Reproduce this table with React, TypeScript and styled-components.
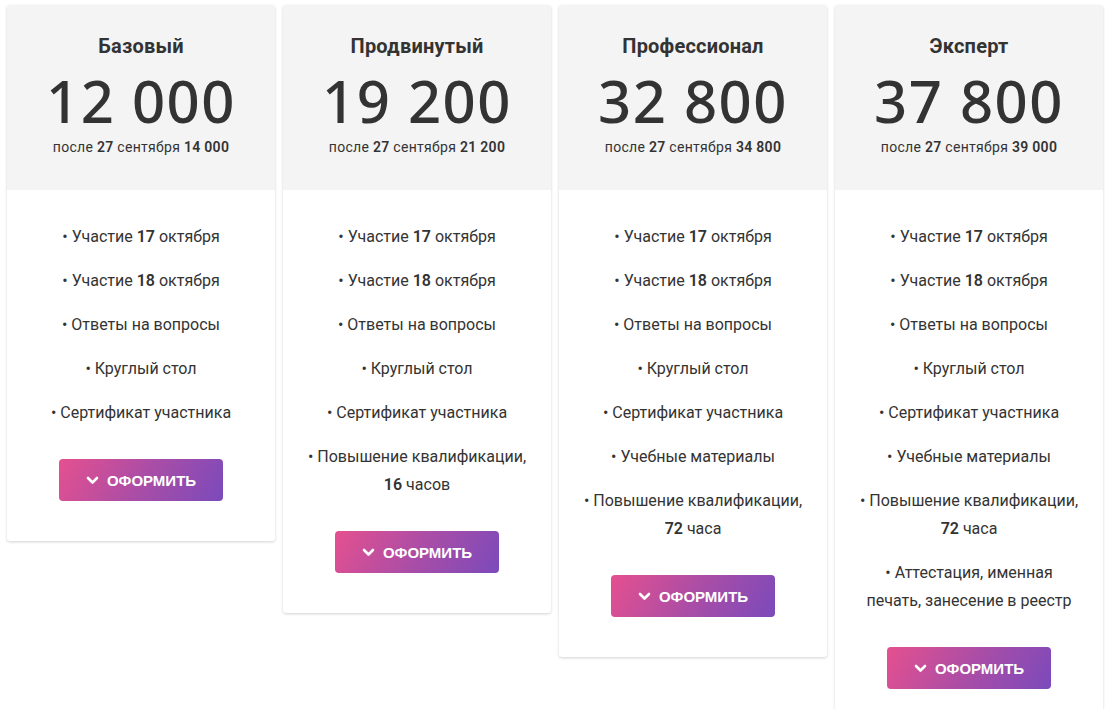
import React from 'react';
import styled, {createGlobalStyle} from 'styled-components';

interface IPlan {
    title: string;
    price: string;
    later: string;
    items: React.ReactNode[];
}

const plans: IPlan[] = [
    {
        title: 'Базовый',
        price: '12 000',
        later: '14 000',
        items: [],
    },
    {
        title: 'Продвинутый',
        price: '19 200',
        later: '21 200',
        items: [<>Повышение квалификации, <b>16</b> часов</>],
    },
    {
        title: 'Профессионал',
        price: '32 800',
        later: '34 800',
        items: ['Учебные материалы', <>Повышение квалификации, <b>72</b> часа</>],
    },
    {
        title: 'Эксперт',
        price: '37 800',
        later: '39 000',
        items: [
            'Учебные материалы',
            <>Повышение квалификации, <b>72</b> часа</>,
            'Аттестация, именная печать, занесение в реестр',
        ],
    },
];

const common: React.ReactNode[] = [
    <>Участие <b>17</b> октября</>,
    <>Участие <b>18</b> октября</>,
    'Ответы на вопросы',
    'Круглый стол',
    'Сертификат участника',
];

const Chevron = () => (
    <svg width="13" height="9" viewBox="0 0 13 9" fill="none">
        <path d="M2 2l4.5 4.5L11 2" stroke="#fff" strokeWidth="2.6" strokeLinecap="round" strokeLinejoin="round" />
    </svg>
);

export default function App() {
    return (
        <>
            <GlobalStyle />
            <Row>
                {plans.map((plan) => (
                    <Card key={plan.title}>
                        <Head>
                            <Title>{plan.title}</Title>
                            <Price>{plan.price}</Price>
                            <Later>
                                после <b>27</b> сентября <b>{plan.later}</b>
                            </Later>
                        </Head>
                        <Body>
                            <List>
                                {[...common, ...plan.items].map((item, i) => (
                                    <Item key={i}>• {item}</Item>
                                ))}
                            </List>
                            <Button>
                                <Chevron />
                                ОФОРМИТЬ
                            </Button>
                        </Body>
                    </Card>
                ))}
            </Row>
        </>
    );
}

const GlobalStyle = createGlobalStyle`
    html {
        overflow: hidden;
    }
    body {
        margin: 0;
        background: #fff;
        font-family: Roboto, "Liberation Sans", sans-serif;
        color: #333;
    }
`;

const Row = styled.div`
    display: flex;
    align-items: flex-start;
    gap: 8px;
    padding: 5px 7px;
`;

const Card = styled.div`
    width: 268px;
    flex-shrink: 0;
    background: #fff;
    border-radius: 3px;
    box-shadow: 0 1px 3px rgba(0, 0, 0, 0.18);
    overflow: hidden;
`;

const Head = styled.div`
    height: 185px;
    box-sizing: border-box;
    padding: 29px 10px 0;
    background: #f4f4f4;
    text-align: center;
`;

const Title = styled.div`
    font-size: 20px;
    line-height: 24px;
    font-weight: 700;
    letter-spacing: 0.2px;
    color: #333;
`;

const Price = styled.div`
    margin-top: 11px;
    font-family: "Noto Sans", sans-serif;
    font-size: 58px;
    line-height: 64px;
    font-weight: 500;
    color: #333;
    letter-spacing: 1.5px;
`;

const Later = styled.div`
    margin-top: 5px;
    font-size: 14px;
    line-height: 18px;
    letter-spacing: 0.3px;
    color: #333;

    b {
        font-weight: 600;
    }
`;

const Body = styled.div`
    padding: 33px 24px 40px;
    text-align: center;
`;

const List = styled.ul`
    list-style: none;
    margin: 0 0 32px;
    padding: 0;
`;

const Item = styled.li`
    font-size: 16px;
    line-height: 28px;
    color: #333;
    margin-bottom: 16px;

    &:last-child {
        margin-bottom: 0;
    }

    b {
        font-weight: 600;
    }
`;

const Button = styled.button`
    display: inline-flex;
    align-items: center;
    justify-content: center;
    gap: 8px;
    width: 164px;
    height: 42px;
    border: none;
    border-radius: 4px;
    background: linear-gradient(120deg, #e5508f 0%, #a64da8 55%, #7b4abb 100%);
    color: #fff;
    font-family: "Liberation Sans", Arial, sans-serif;
    font-size: 15px;
    font-weight: 700;
    cursor: pointer;
`;
